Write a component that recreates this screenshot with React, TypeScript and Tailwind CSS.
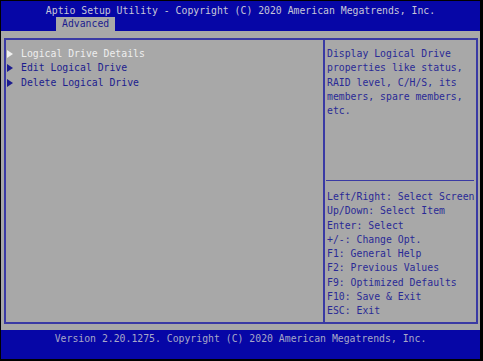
const items = ['Logical Drive Details', 'Edit Logical Drive', 'Delete Logical Drive'];

const desc = ['Display Logical Drive', 'properties like status,', 'RAID level, C/H/S, its', 'members, spare members,', 'etc.'];

const help = [
  'Left/Right: Select Screen',
  'Up/Down: Select Item',
  'Enter: Select',
  '+/-: Change Opt.',
  'F1: General Help',
  'F2: Previous Values',
  'F9: Optimized Defaults',
  'F10: Save & Exit',
  'ESC: Exit',
];

function Arrow({ color }: { color: string }) {
  return (
    <svg width="6" height="8" viewBox="0 0 6 8" className="shrink-0">
      <path d="M0 0 L6 4 L0 8 Z" fill={color} />
    </svg>
  );
}

export default function App() {
  return (
    <div className="w-[483px] h-[361px] bg-black pt-[1px] pl-[1px]">
      <div
        className="w-[479px] h-[358px] flex flex-col text-[9.8px] leading-[14.3px]"
        style={{ fontFamily: '"DejaVu Sans Mono", "Liberation Mono", monospace' }}
      >
        {/* header */}
        <div className="h-[30px] bg-[#0606a6] flex flex-col">
          <div className="text-center text-[#c6c6d8] pt-[3px] h-[16px] whitespace-pre">
            Aptio Setup Utility - Copyright (C) 2020 American Megatrends, Inc.
          </div>
          <div className="flex pl-[55px]">
            <div className="bg-[#a8a8a8] text-[#1c1c8e] h-[14px] px-[6px] leading-[14px]">Advanced</div>
          </div>
        </div>

        {/* body */}
        <div className="flex-1 bg-[#a8a8a8] pt-[7px] pl-[3px] pr-[2px] pb-[6px]">
          <div className="h-full border-2 border-[#3a3aa4] flex">
            <div className="w-[317px] pt-[7px] pl-[1px]">
              {items.map((t, i) => (
                <div key={t} className="flex items-center gap-[8px] h-[14.3px]">
                  <Arrow color={i === 0 ? '#f0f0f0' : '#1c1c8e'} />
                  <span className={i === 0 ? 'text-[#eeeeee]' : 'text-[#1c1c8e]'}>{t}</span>
                </div>
              ))}
            </div>
            <div className="w-[2px] bg-[#3a3aa4]" />
            <div className="flex-1 flex flex-col">
              <div className="h-[140px] pt-[7px] pl-[2px] text-[#2a2a96] whitespace-pre">
                {desc.map((d) => (
                  <div key={d}>{d}</div>
                ))}
              </div>
              <div className="h-[1px] bg-[#3a3aa4] ml-[1px] mr-[2px]" />
              <div className="pt-[9px] pl-[2px] text-[#2a2a96] whitespace-pre">
                {help.map((h) => (
                  <div key={h}>{h}</div>
                ))}
              </div>
            </div>
          </div>
        </div>

        {/* footer */}
        <div className="h-[29px] bg-[#0606a6] text-center text-[#a8a8c8] pt-[2px] whitespace-pre">
          Version 2.20.1275. Copyright (C) 2020 American Megatrends, Inc.
        </div>
      </div>
    </div>
  );
}
